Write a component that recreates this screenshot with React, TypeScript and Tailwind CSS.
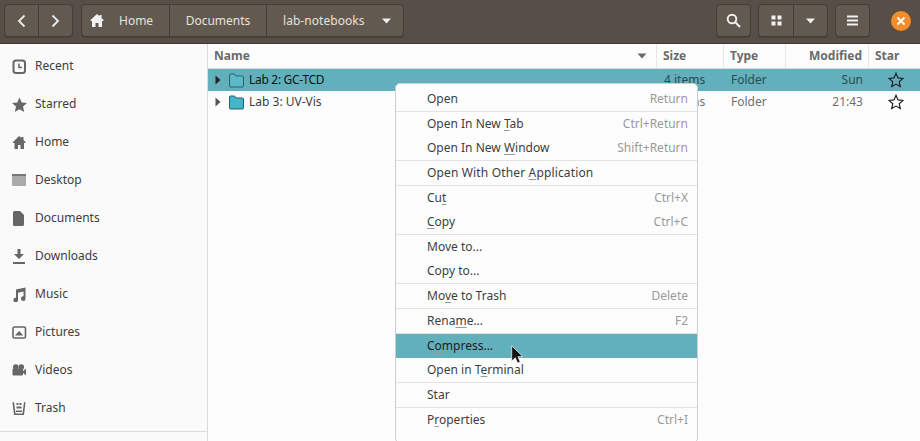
import React from "react";

const FONT = "[font-family:'Noto_Sans','Open_Sans',sans-serif]";

function U({ children }: { children: React.ReactNode }) {
  return <span className="underline decoration-[#9a9a9a] underline-offset-2">{children}</span>;
}

const icons: Record<string, React.ReactNode> = {
  recent: (
    <g>
      <rect x="1.500" y="1.500" width="11.500" height="12.500" rx="2.500" fill="none" stroke="#666" strokeWidth="2" />
      <path d="M7 4.500V8.500H10" fill="none" stroke="#666" strokeWidth="1.500" />
    </g>
  ),
  star: <path d="M7.500 0.500l2.200 5 5.300.5-4 3.600 1.200 5.400-4.700-2.800-4.700 2.800 1.200-5.400-4-3.600 5.300-.5z" fill="#666" />,
  home: <path d="M7 1L1 7v1h1.500v6H6v-4h2.500v4H12V8h1.500V7l-2-2V2h-2v1z" fill="#666" />,
  desktop: (
    <g>
      <rect x="0" y="1" width="14" height="12" rx="1" fill="#aaa" />
      <rect x="0" y="1" width="14" height="2" fill="#777" />
    </g>
  ),
  docs: <path d="M2.500 0H8l4 4v9.500a1.500 1.500 0 0 1-1.500 1.500h-8A1.500 1.500 0 0 1 1 13.500V1.500A1.500 1.500 0 0 1 2.500 0z" fill="#666" />,
  down: <path d="M5.500 0h3v5H12L7 10 2 5h3.500zM1 13h12v2H1z" fill="#666" />,
  music: <path d="M4 2.500L13.500 0.500V11.500a2.300 2.300 0 1 1-2-2.200V4.500L6 5.700V13a2.300 2.300 0 1 1-2-2.200z" fill="#666" />,
  pics: (
    <g>
      <rect x="1" y="2" width="12.500" height="11" rx="1.500" fill="none" stroke="#666" strokeWidth="1.600" />
      <path d="M3 10.500L7.200 6l4 4.500z" fill="#666" />
    </g>
  ),
  videos: (
    <g fill="#666">
      <circle cx="3.800" cy="4" r="2.800" />
      <circle cx="9.300" cy="4" r="2.800" />
      <rect x="0.500" y="5.500" width="10.500" height="7" rx="1" />
      <path d="M11 8l3-2.200v6.500L11 10z" />
    </g>
  ),
  trash: (
    <g fill="#666">
      <path d="M0.500 1.500L2 1l1.500 11.500h7L12 1l1.500.5L12 14H2z" />
      <path d="M4 9.500h6V11H4zM4.500 2h2v2h-2zM7.500 2h2v2h-2zM4.500 5.500h5v2h-5z" />
    </g>
  ),
};

const places: [string, string][] = [
  ["recent", "Recent"],
  ["star", "Starred"],
  ["home", "Home"],
  ["desktop", "Desktop"],
  ["docs", "Documents"],
  ["down", "Downloads"],
  ["music", "Music"],
  ["pics", "Pictures"],
  ["videos", "Videos"],
  ["trash", "Trash"],
];

function Folder({ dark }: { dark?: boolean }) {
  return (
    <svg width="15" height="15" viewBox="0 0 15 15" className="shrink-0">
      <path
        d="M1.500 1h4l1.500 2h6.500a1 1 0 0 1 1 1v9a1 1 0 0 1-1 1h-12a1 1 0 0 1-1-1V2a1 1 0 0 1 1-1z"
        fill={dark ? "#5cb7c7" : "#45b6c8"}
        stroke="#1f6473"
      />
    </svg>
  );
}

function StarOutline() {
  return (
    <svg width="16" height="16" viewBox="0 0 16 16" className="shrink-0">
      <path
        d="M8 1.300l2 4.600 5 .5-3.800 3.300 1.100 4.900L8 12.100l-4.300 2.500 1.100-4.900L1 6.400l5-.5z"
        fill="none"
        stroke="#222"
        strokeWidth="1.200"
      />
    </svg>
  );
}

function Row({ name, modified, selected }: { name: string; modified: string; selected?: boolean }) {
  const muted = selected ? "text-[#2a4a52]" : "text-[#6f6f6f]";
  return (
    <div className={`flex h-[22px] items-center text-[12px] ${selected ? "bg-[#63b0bd]" : "bg-[#fdfdfd]"}`}>
      <div className="flex w-[449px] items-center pl-[6px]">
        <svg width="6" height="10" viewBox="0 0 6 10" className="ml-[1px] mr-[8px]">
          <path d="M0.500 0.500L5.500 5L0.500 9.500z" fill={selected ? "#222" : "#555"} />
        </svg>
        <Folder dark={selected} />
        <span className={`ml-[5px] ${selected ? "tracking-[-0.3px] text-[#111]" : "text-[#3d3d3d]"}`}>{name}</span>
      </div>
      <div className={`w-[67px] pl-[7px] ${muted}`}>4 items</div>
      <div className={`w-[62px] pl-[7px] ${muted}`}>Folder</div>
      <div className={`w-[78px] pr-[1px] text-right ${muted}`}>{modified}</div>
      <div className="flex flex-1 justify-center pl-[8px]">
        <StarOutline />
      </div>
    </div>
  );
}

function MenuItem({
  children,
  accel,
  active,
}: {
  children: React.ReactNode;
  accel?: string;
  active?: boolean;
}) {
  return (
    <div
      className={`flex h-[24px] items-center justify-between pl-[31px] pr-[9px] text-[12px] ${
        active ? "bg-[#63b0bd] text-[#1c1c1c]" : "text-[#3d3d3d]"
      }`}
    >
      <span>{children}</span>
      {accel && <span className="text-[#9a9a9a]">{accel}</span>}
    </div>
  );
}

function Sep() {
  return <div className="h-px bg-[#e3e3e3]" />;
}

function Button({ className, children }: { className: string; children: React.ReactNode }) {
  return (
    <div
      className={`flex h-[33px] items-center justify-center rounded-[4px] border border-[#453d37] bg-[#625950] shadow-[0_1px_0_#4a423c] ${className}`}
    >
      {children}
    </div>
  );
}

function Caret() {
  return (
    <svg width="10" height="6" viewBox="0 0 10 6">
      <path d="M0 0.500h9L4.500 5.500z" fill="#eee" />
    </svg>
  );
}

export default function App() {
  return (
    <div className={`relative flex h-[441px] w-[920px] flex-col overflow-hidden bg-[#fdfdfd] ${FONT}`}>
      <header className="flex h-[44px] shrink-0 items-center border-b border-[#3d3631] bg-[#574e47] pl-[4px] pr-[9px] pb-[2px]">
        <Button className="w-[69px] !justify-start">
          <div className="flex h-full w-[34px] items-center justify-center border-r border-[#453d37]">
            <svg width="9" height="14" viewBox="0 0 9 14">
              <path d="M7.500 1.500L2 7l5.500 5.500" fill="none" stroke="#eee" strokeWidth="1.800" />
            </svg>
          </div>
          <div className="flex h-full flex-1 items-center justify-center">
            <svg width="9" height="14" viewBox="0 0 9 14">
              <path d="M1.500 1.500L7 7l-5.500 5.500" fill="none" stroke="#eee" strokeWidth="1.800" />
            </svg>
          </div>
        </Button>
        <Button className="ml-[8px] w-[323px] !justify-start text-[12px] text-[#e6e2dd]">
          <div className="flex h-full w-[88px] items-center border-r border-[#453d37] pl-[8px]">
            <svg width="14" height="13" viewBox="0 0 14 13">
              <path d="M7 0L0.500 6v1H2v6h3.500V9h3v4H12V7h1.500V6L11.500 4V1h-2v1.200z" fill="#f2f2f2" />
            </svg>
            <span className="ml-[15px]">Home</span>
          </div>
          <div className="flex h-full w-[97px] items-center justify-center border-r border-[#453d37]">Documents</div>
          <div className="flex h-full flex-1 items-center pl-[16px]">
            <span className="tracking-[0.05px]">lab-notebooks</span>
            <span className="ml-[17px] flex">
              <Caret />
            </span>
          </div>
        </Button>
        <div className="flex-1" />
        <Button className="w-[35px]">
          <svg width="15" height="15" viewBox="0 0 15 15">
            <circle cx="6" cy="6" r="4.300" fill="none" stroke="#f2f2f2" strokeWidth="1.900" />
            <path d="M9.300 9.300L14 14" stroke="#f2f2f2" strokeWidth="2" />
          </svg>
        </Button>
        <Button className="ml-[7px] w-[70px] !justify-start">
          <div className="flex h-full w-[35px] items-center justify-center border-r border-[#453d37]">
            <svg width="11" height="11" viewBox="0 0 11 11" fill="#f2f2f2">
              <rect x="0.500" y="0.500" width="4" height="4" />
              <rect x="6.500" y="0.500" width="4" height="4" />
              <rect x="0.500" y="6.500" width="4" height="4" />
              <rect x="6.500" y="6.500" width="4" height="4" />
            </svg>
          </div>
          <div className="flex h-full flex-1 items-center justify-center">
            <Caret />
          </div>
        </Button>
        <Button className="ml-[7px] w-[35px]">
          <svg width="11" height="11" viewBox="0 0 11 11" fill="#f2f2f2">
            <rect y="0.500" width="11" height="2" />
            <rect y="4.500" width="11" height="2" />
            <rect y="8.500" width="11" height="2" />
          </svg>
        </Button>
        <div className="ml-[21px] flex h-[20px] w-[20px] items-center justify-center rounded-full bg-[#f38e2e]">
          <svg width="10" height="10" viewBox="0 0 10 10">
            <path d="M1.500 1.500l7 7M8.500 1.500l-7 7" stroke="#fff" strokeWidth="1.800" />
          </svg>
        </div>
      </header>

      <div className="flex min-h-0 flex-1">
        <aside className="flex w-[208px] shrink-0 flex-col border-r border-[#dcdcdc] bg-[#fafafa] pt-[3px]">
          {places.map(([icon, label]) => (
            <div key={label} className="flex h-[38px] shrink-0 items-center pl-[12px] text-[12px] text-[#3d3d3d]">
              <svg width="15" height="15" viewBox="0 0 15 15" className="shrink-0">
                {icons[icon]}
              </svg>
              <span className="ml-[8px]">{label}</span>
            </div>
          ))}
          <div className="mt-[4px] h-px bg-[#dcdcdc]" />
        </aside>

        <main className="flex min-w-0 flex-1 flex-col">
          <div className="flex h-[25px] shrink-0 items-center border-b border-[#dcdcdc] text-[12px] font-bold text-[#6a6a6a]">
            <div className="flex h-full w-[449px] items-center justify-between border-r border-[#e6e6e6] pl-[6px] pr-[8px]">
              <span>Name</span>
              <svg width="10" height="6" viewBox="0 0 10 6" className="mr-[1px]">
                <path d="M0.500 0.500h9L5 5.500z" fill="#6a6a6a" />
              </svg>
            </div>
            <div className="flex h-full w-[67px] items-center border-r border-[#e6e6e6] pl-[6px]">Size</div>
            <div className="flex h-full w-[62px] items-center border-r border-[#e6e6e6] pl-[6px]">Type</div>
            <div className="flex h-full w-[83px] items-center justify-end border-r border-[#e6e6e6] pr-[6px]">Modified</div>
            <div className="flex h-full flex-1 items-center pl-[6px]">Star</div>
          </div>
          <Row name="Lab 2: GC-TCD" modified="Sun" selected />
          <Row name="Lab 3: UV-Vis" modified="21:43" />
        </main>
      </div>

      <div className="absolute left-[395px] top-[83px] w-[303px] rounded-[5px] border border-[#cfcfcf] bg-[#fdfdfd] pb-[10px] pt-[3px]">
        <MenuItem accel="Return">Open</MenuItem>
        <Sep />
        <MenuItem accel="Ctrl+Return">Open In New <U>T</U>ab</MenuItem>
        <MenuItem accel="Shift+Return">Open In New <U>W</U>indow</MenuItem>
        <Sep />
        <MenuItem><span className="tracking-[0.15px]">Open With Other <U>A</U>pplication</span></MenuItem>
        <Sep />
        <MenuItem accel="Ctrl+X">Cu<U>t</U></MenuItem>
        <MenuItem accel="Ctrl+C"><U>C</U>opy</MenuItem>
        <Sep />
        <MenuItem>Move to...</MenuItem>
        <MenuItem>Copy to...</MenuItem>
        <Sep />
        <MenuItem accel="Delete">Mo<U>v</U>e to Trash</MenuItem>
        <Sep />
        <MenuItem accel="F2">Rena<U>m</U>e...</MenuItem>
        <Sep />
        <MenuItem active>C<U>o</U>mpress...</MenuItem>
        <MenuItem>Open in T<U>e</U>rminal</MenuItem>
        <Sep />
        <MenuItem>Star</MenuItem>
        <Sep />
        <MenuItem accel="Ctrl+I">P<U>r</U>operties</MenuItem>
      </div>

      <svg width="15" height="20" viewBox="0 0 15 20" className="absolute left-[511px] top-[345px]">
        <path d="M0.700 0.700V16l3.600-3.300 2.300 5.300 2.600-1.100-2.300-5.200h5z" fill="#111" stroke="#eee" strokeWidth="0.800" />
      </svg>
    </div>
  );
}
